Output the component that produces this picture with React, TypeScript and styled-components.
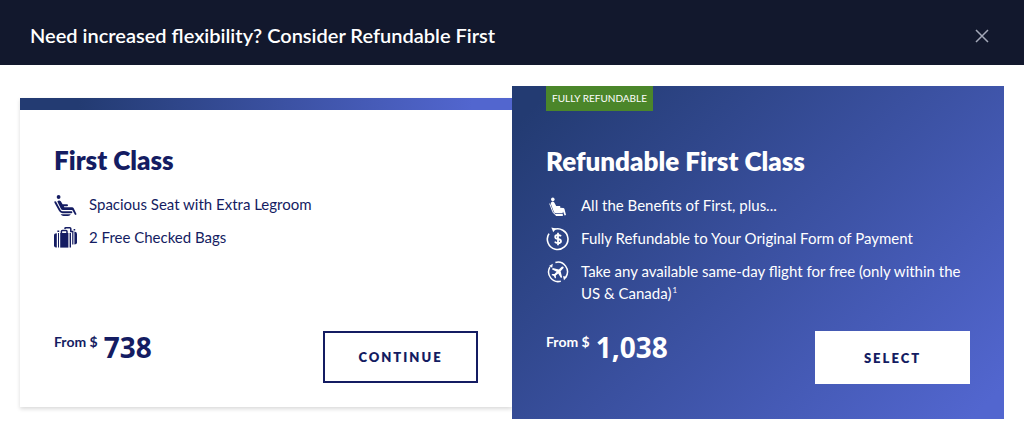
import React from "react";
import styled, { createGlobalStyle } from "styled-components";

const navy = "#141c62";
const brandGradient = "#233b72 5%, #5266cf 96%";

const GlobalStyle = createGlobalStyle`
  *, *::before, *::after { box-sizing: border-box; }
  body {
    margin: 0;
    background: #fff;
    color: ${navy};
    font-family: Lato, "Noto Sans", sans-serif;
  }
`;

const Header = styled.header`
  display: flex;
  align-items: center;
  justify-content: space-between;
  padding: 21px 34px 15px 30px;
  background: #12182d;
  color: #fff;
`;

const Heading = styled.h1`
  margin: 0;
  font-size: 20px;
  font-weight: 600;
  line-height: 29px;
`;

const CloseButton = styled.button`
  display: flex;
  padding: 1px;
  border: 0;
  background: none;
  color: #a3a8b8;
  cursor: pointer;
`;

const Offers = styled.main`
  display: grid;
  grid-template-columns: 1fr 1fr;
  padding: 21px 20px 24px;
`;

const Card = styled.section<{ $featured?: boolean }>`
  display: flex;
  flex-direction: column;
  margin: ${(p) => (p.$featured ? "0" : "12px 0")};
  padding: ${(p) => (p.$featured ? "0 34px 35px" : "0 34px 24px")};
  color: ${(p) => (p.$featured ? "#fff" : navy)};
  background: ${(p) => (p.$featured ? `linear-gradient(135deg, ${brandGradient})` : "#fff")};
  box-shadow: ${(p) => (p.$featured ? "none" : "0 2px 4px rgba(0, 0, 0, 0.15)")};
`;

const Accent = styled.div`
  height: 12px;
  margin: 0 -34px;
  background: linear-gradient(90deg, #233b72 12%, #5266cf 92%);
`;

const Badge = styled.span`
  align-self: flex-start;
  padding: 0 6px;
  background: #4b862a;
  color: #fff;
  font-size: 10px;
  line-height: 25px;
  text-transform: uppercase;
`;

const Title = styled.h2`
  margin: 34px 0 17px;
  font-size: 26px;
  font-weight: 800;
  line-height: 32px;
`;

const Features = styled.ul`
  display: flex;
  flex-direction: column;
  gap: 9px;
  margin: 0 0 27px;
  padding: 0;
  list-style: none;
`;

const Feature = styled.li`
  display: flex;
  gap: 11px;
  font-size: 15px;
  line-height: 22px;
`;

const FeatureIcon = styled.svg`
  flex: none;
  width: 24px;
  height: 24px;
`;

const Note = styled.sup`
  margin-left: 1px;
  font-size: 8px;
  line-height: 0;
  vertical-align: 6px;
`;

const Footer = styled.footer`
  display: flex;
  align-items: flex-start;
  justify-content: space-between;
  margin-top: auto;
`;

const Price = styled.p`
  display: flex;
  gap: 6px;
  margin: 0;
  font-weight: 700;
`;

const PriceLabel = styled.span`
  font-size: 14px;
  line-height: 22px;
`;

const Amount = styled.span`
  font-family: "Noto Sans", sans-serif;
  font-size: 28px;
  line-height: 32px;
`;

const ActionButton = styled.button<{ $solid?: boolean }>`
  width: 155px;
  height: ${(p) => (p.$solid ? "53px" : "52px")};
  border: ${(p) => (p.$solid ? "0" : `2px solid ${navy}`)};
  background: #fff;
  color: ${navy};
  font-family: inherit;
  font-size: 13px;
  font-weight: 800;
  letter-spacing: 2px;
  text-transform: uppercase;
  cursor: pointer;
`;

const SeatIcon = () => (
  <FeatureIcon viewBox="0 -1 24 24" aria-hidden="true">
    <circle cx="4.6" cy="3" r="1.9" fill="currentColor" />
    <path
      d="M1.3 8.2 5.9 16.6Q6.8 18.2 8.6 18.2H17.4"
      fill="none"
      stroke="currentColor"
      strokeWidth="1.9"
      strokeLinecap="round"
    />
    <path
      d="M3.3 7.6Q5 5.4 6.8 7.2L8.6 10.3H13Q14 10.3 14 11.3T13 12.3H9.8L10.3 13.2H18Q19.2 13.2 19.7 14.3L22.6 20.2 21.1 20.9 18.3 16H8.8Q7.6 16 7 14.9Z"
      fill="currentColor"
    />
    <path d="M6.6 20.3H16.8Q16 22 14 22H9.6Q7.8 22 6.6 20.3Z" fill="currentColor" />
  </FeatureIcon>
);

const SmallSeatIcon = () => (
  <FeatureIcon viewBox="0 0 24 24" aria-hidden="true">
    <circle cx="6.8" cy="5.4" r="1.8" fill="currentColor" />
    <path
      d="M5.6 8Q7 7 8.3 8.6L10.2 12H14.2V13.7L17.2 13.9Q18.2 14 18.5 15.1L20 21 18.6 21.4 17 17.4 16.6 19.2H9.8Q8.5 19.2 7.9 17.9L4.8 9.8Q4.6 8.4 5.6 8Z"
      fill="currentColor"
    />
    <path d="M3.7 9.6 6.8 17.8Q7.6 19.8 9 20" fill="none" stroke="currentColor" />
    <path d="M8.6 20H16.8V22H10Z" fill="currentColor" />
  </FeatureIcon>
);

const BagsIcon = () => (
  <FeatureIcon viewBox="0 0 24 24" aria-hidden="true">
    <g fill="currentColor">
      <path d="M2.8 7.2V21.6H2Q0 21.6 0 19.6V9.4Q0 7.2 2.8 7.2Z" />
      <path d="M4 7H5V21.6H4Z" />
      <path d="M6.2 7H14.4V21.6H6.2Z" />
      <path d="M15.6 7H17V21.6H15.6Z" />
      <path d="M18.2 5.8H19.4V18.4H18.2Z" />
      <path d="M20.4 5.4Q23 5.6 23 8V16.4Q23 18.4 20.4 18.6Z" />
      <path d="M3.4 4.6H5.2V6H3.4ZM19.6 3H21.2V4.6H19.6Z" />
    </g>
    <path
      d="M7.4 7.2V5.4Q7.4 4.4 8.4 4.4H12Q13 4.4 13 5.4V7.2M11 3V2.4Q11 1.7 11.8 1.7H15.8Q16.8 1.7 16.8 2.7V5.4H19.4"
      fill="none"
      stroke="currentColor"
      strokeWidth="1.5"
    />
  </FeatureIcon>
);

const RefundIcon = () => (
  <FeatureIcon viewBox="0 0 24 24" aria-hidden="true">
    <path
      d="M7.4 2.8A10.3 10.3 0 1 1 3 6.6"
      fill="none"
      stroke="currentColor"
      strokeWidth="1.6"
    />
    <path d="M5.4 0.6 10 1.4 7.2 5.2Z" fill="currentColor" />
    <path
      d="M15 9.3Q14.2 8 12 8 9.2 8 9.2 9.9 9.2 11.5 12 12 15 12.5 15 14.2 15 16.1 12 16.1 9.7 16.1 8.8 14.6M12 5.8V18.2"
      fill="none"
      stroke="currentColor"
      strokeWidth="1.8"
    />
  </FeatureIcon>
);

const FlightIcon = () => (
  <FeatureIcon viewBox="0 0 24 24" aria-hidden="true">
    <path
      d="M9.4 2.4A9.6 9.6 0 0 1 19.8 17M14.8 21.2A9.6 9.6 0 0 1 3.9 7.2"
      fill="none"
      stroke="currentColor"
      strokeWidth="1.5"
    />
    <path d="M3 6 6.8 3.8 6.2 7.8ZM21.4 16.6 18 20.2 17 16.2Z" fill="currentColor" />
    <path
      d="M16.8 6.5Q17.9 6.7 17.6 7.9L14.6 11.2 16.1 17.2 15 18.1 12.2 13.4 9.8 15.6 10 17.8 9.1 18.6 7.9 16 5.5 14.9 6.3 14 8.5 14.1 10.6 11.8 5.9 9.2 6.8 8.1 12.9 9.4 15.7 6.8Z"
      fill="currentColor"
    />
  </FeatureIcon>
);

export default function App() {
  return (
    <>
      <GlobalStyle />
      <Header>
        <Heading>Need increased flexibility? Consider Refundable First</Heading>
        <CloseButton aria-label="Close">
          <svg width="14" height="14" viewBox="0 0 14 14" aria-hidden="true">
            <path d="M1 1 13 13M13 1 1 13" stroke="currentColor" strokeWidth="1.5" />
          </svg>
        </CloseButton>
      </Header>
      <Offers>
        <Card>
          <Accent />
          <Title>First Class</Title>
          <Features>
            <Feature>
              <SeatIcon />
              <span>Spacious Seat with Extra Legroom</span>
            </Feature>
            <Feature>
              <BagsIcon />
              <span>2 Free Checked Bags</span>
            </Feature>
          </Features>
          <Footer>
            <Price>
              <PriceLabel>From $</PriceLabel>
              <Amount>738</Amount>
            </Price>
            <ActionButton>Continue</ActionButton>
          </Footer>
        </Card>
        <Card $featured>
          <Badge>Fully Refundable</Badge>
          <Title>Refundable First Class</Title>
          <Features>
            <Feature>
              <SmallSeatIcon />
              <span>All the Benefits of First, plus...</span>
            </Feature>
            <Feature>
              <RefundIcon />
              <span>Fully Refundable to Your Original Form of Payment</span>
            </Feature>
            <Feature>
              <FlightIcon />
              <span>
                Take any available same-day flight for free (only within the US &amp; Canada)
                <Note>1</Note>
              </span>
            </Feature>
          </Features>
          <Footer>
            <Price>
              <PriceLabel>From $</PriceLabel>
              <Amount>1,038</Amount>
            </Price>
            <ActionButton $solid>Select</ActionButton>
          </Footer>
        </Card>
      </Offers>
    </>
  );
}
